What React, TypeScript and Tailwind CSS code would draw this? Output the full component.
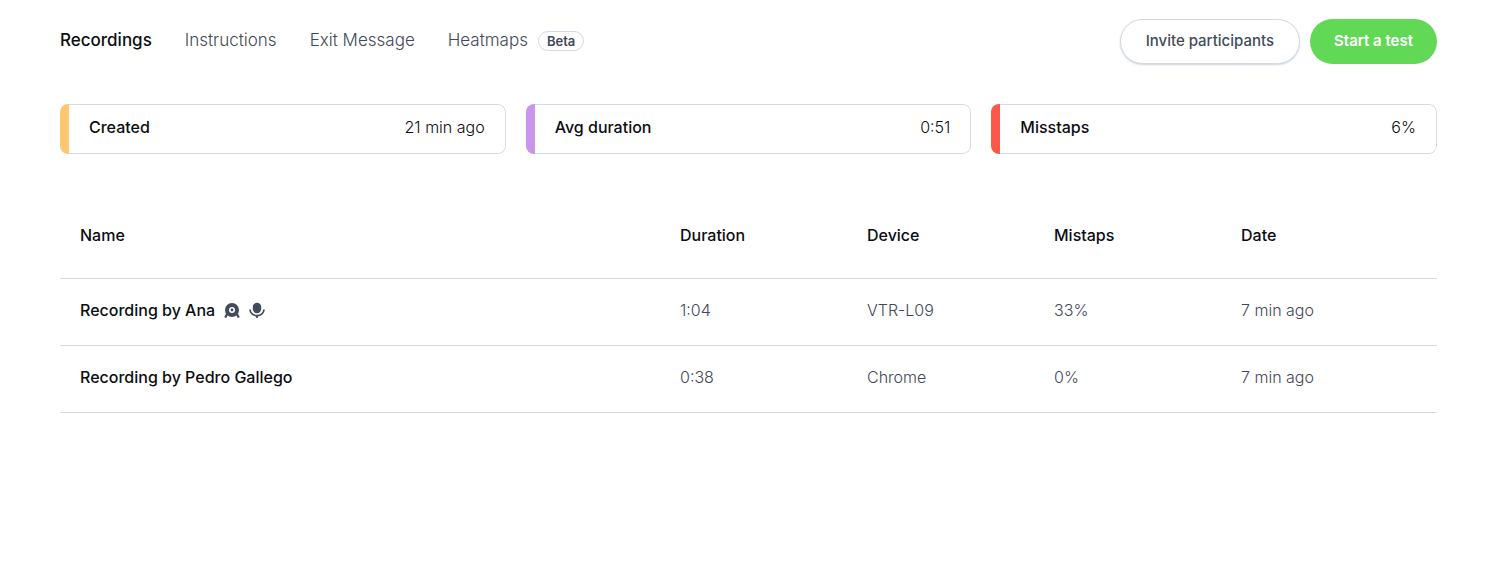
const tabs = ["Instructions", "Exit Message"];

const stats = [
  { label: "Created", value: "21 min ago", bar: "bg-[#ffc772]" },
  { label: "Avg duration", value: "0:51", bar: "bg-[#c996ec]" },
  { label: "Misstaps", value: "6%", bar: "bg-[#fd574a]" },
];

const columns = [
  { title: "Name", width: "" },
  { title: "Duration", width: "w-[187px]" },
  { title: "Device", width: "w-[187px]" },
  { title: "Mistaps", width: "w-[187px]" },
  { title: "Date", width: "w-[216px]" },
];

const recordings = [
  { name: "Recording by Ana", media: true, cells: ["1:04", "VTR-L09", "33%", "7 min ago"] },
  { name: "Recording by Pedro Gallego", media: false, cells: ["0:38", "Chrome", "0%", "7 min ago"] },
];

function WebcamIcon() {
  return (
    <svg className="size-4" viewBox="0 0 16 16" fill="none" stroke="currentColor" aria-hidden="true">
      <circle cx="8" cy="8" r="5" strokeWidth="4" />
      <circle cx="8" cy="8" r="1.4" fill="currentColor" stroke="none" />
      <path d="M3.4 11.6 1.2 15.6M12.6 11.6l2.2 4" strokeWidth="2.2" />
    </svg>
  );
}

function MicIcon() {
  return (
    <svg className="size-4" viewBox="0 0 16 16" fill="none" stroke="currentColor" aria-hidden="true">
      <rect x="3.8" y="0.8" width="8.4" height="10.4" rx="4.2" fill="currentColor" stroke="none" />
      <path d="M1 7.6a7 6.1 0 0 0 14 0" strokeWidth="1.7" />
      <path d="M8 13.2V16" strokeWidth="1.8" />
    </svg>
  );
}

export default function App() {
  return (
    <main className="bg-white pt-[19px] pr-[70px] pb-10 pl-[60px] font-['Inter','Liberation_Sans',sans-serif] text-base leading-6 text-[#0c0d12]">
      <header className="flex items-start justify-between">
        <nav className="flex items-center gap-[33px] pt-[9px] text-[17px] leading-6 font-light text-[#434859]">
          <a href="#recordings" aria-current="page" className="font-medium text-[#0c0d12]">
            Recordings
          </a>
          {tabs.map((tab) => (
            <a key={tab} href="#">
              {tab}
            </a>
          ))}
          <a href="#heatmaps" className="flex items-center gap-2.5">
            Heatmaps
            <span className="mt-0.5 rounded-full border border-[#d3dae5] px-2 text-[13px] leading-[18px] font-semibold">
              Beta
            </span>
          </a>
        </nav>
        <div className="flex gap-2.5 text-[15px]">
          <button
            type="button"
            className="h-[45px] rounded-full border border-[#d3dae5] bg-white px-[25px] pb-0.5 font-medium text-[#434c5a] shadow-[0_1px_2px_#ccd3de]"
          >
            Invite participants
          </button>
          <button type="button" className="h-[45px] rounded-full bg-[#61d957] px-6 pb-0.5 font-semibold text-white">
            Start a test
          </button>
        </div>
      </header>

      <section className="mt-10 grid grid-cols-3 gap-5">
        {stats.map((stat) => (
          <div key={stat.label} className="flex h-[50px] overflow-hidden rounded-lg">
            <div className={`w-[9px] shrink-0 ${stat.bar}`} />
            <div className="flex flex-1 items-center justify-between rounded-r-lg border border-l-0 border-[#d3dae5] px-5 pb-1">
              <span className="font-medium">{stat.label}</span>
              <span className="font-light">{stat.value}</span>
            </div>
          </div>
        ))}
      </section>

      <table className="mt-10 w-full table-fixed text-left">
        <thead>
          <tr className="border-b border-[#d3dae5]">
            {columns.map((column) => (
              <th key={column.title} scope="col" className={`h-[84px] px-5 pb-0.5 font-medium ${column.width}`}>
                {column.title}
              </th>
            ))}
          </tr>
        </thead>
        <tbody>
          {recordings.map((recording) => (
            <tr key={recording.name} className="border-b border-[#d3dae5]">
              <th scope="row" className="h-[67px] px-5 pb-1 font-medium">
                <div className="flex items-center gap-[9px]">
                  {recording.name}
                  {recording.media && (
                    <span className="flex gap-[9px] text-[#434c5a]">
                      <WebcamIcon />
                      <MicIcon />
                    </span>
                  )}
                </div>
              </th>
              {recording.cells.map((cell, index) => (
                <td key={index} className="px-5 pb-1 font-light text-[#434859]">
                  {cell}
                </td>
              ))}
            </tr>
          ))}
        </tbody>
      </table>
    </main>
  );
}
